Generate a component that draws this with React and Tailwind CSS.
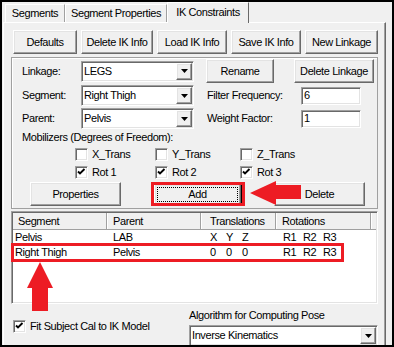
import React from 'react';

// classic win32 bevels
const raised =
  'border border-t-white border-l-white border-r-[#696969] border-b-[#696969] shadow-[inset_-1px_-1px_0_#a0a0a0,inset_1px_1px_0_#e3e3e3] bg-[#f0f0f0]';
const sunken =
  'border border-t-[#a0a0a0] border-l-[#a0a0a0] border-r-white border-b-white shadow-[inset_1px_1px_0_#696969,inset_-1px_-1px_0_#e3e3e3] bg-white p-px';

function Btn({ className = '', children }) {
  return (
    <div className={`flex shrink-0 items-center justify-center ${raised} ${className}`}>
      {children}
    </div>
  );
}

function Combo({ value, className = '' }) {
  return (
    <div className={`flex h-[21px] shrink-0 ${sunken} ${className}`}>
      <div className="flex flex-1 items-center pl-px">{value}</div>
      <div className={`flex w-[16px] items-center justify-center ${raised}`}>
        <svg width="7" height="4" viewBox="0 0 7 4">
          <polygon points="0,0 7,0 3.5,4" fill="#000" />
        </svg>
      </div>
    </div>
  );
}

function Field({ value, className = '' }) {
  return (
    <div className={`flex h-[18px] shrink-0 items-center pl-[2px] ${sunken} ${className}`}>
      {value}
    </div>
  );
}

function Check({ checked, label, className = '' }) {
  return (
    <div className={`flex shrink-0 items-center gap-[4px] ${className}`}>
      <div className={`relative h-[13px] w-[13px] ${sunken}`}>
        {checked && (
          <svg className="absolute left-[-1px] top-[-1px]" width="13" height="13" viewBox="0 0 13 13">
            <polyline points="3,5.5 5,7.5 9.5,3" fill="none" stroke="#000" strokeWidth="1.9" />
          </svg>
        )}
      </div>
      <span>{label}</span>
    </div>
  );
}

function Tab({ className = '', children }) {
  return (
    <div
      className={`flex h-[18px] shrink-0 items-center justify-center border border-b-0 border-t-white border-l-white border-r-[#a0a0a0] ${className}`}
    >
      {children}
    </div>
  );
}

const rows = [
  { seg: 'Pelvis', parent: 'LAB', tr: ['X', 'Y', 'Z'] },
  { seg: 'Right Thigh', parent: 'Pelvis', tr: ['0', '0', '0'] }
];

export default function App() {
  return (
    <div className="relative h-[347px] w-[394px] overflow-hidden border-2 border-black bg-[#f0f0f0] font-['Liberation_Sans',Arial,sans-serif] text-[11px] leading-none tracking-[-0.4px] text-black">
      {/* tabs */}
      <div className="flex h-[20px] items-end pl-[3px]">
        <Tab className="w-[60px]">Segments</Tab>
        <Tab className="w-[102px]">Segment Properties</Tab>
        <div className="relative z-10 -mb-px flex h-[21px] w-[82px] items-center justify-center border border-b-0 border-t-white border-l-white border-r-[#696969] bg-[#f0f0f0] pb-[2px]">
          IK Constraints
        </div>
      </div>

      {/* tab page */}
      <div className="ml-px h-[330px] w-[383px] border border-t-white border-l-white border-r-[#696969] border-b-[#696969] shadow-[inset_-1px_0_0_#a0a0a0]">
        <div className="mt-[7px] flex gap-[4px] pl-[9px]">
          <Btn className="h-[24px] w-[64px]">Defaults</Btn>
          <Btn className="h-[24px] w-[72px]">Delete IK Info</Btn>
          <Btn className="h-[24px] w-[70px]">Load IK Info</Btn>
          <Btn className="h-[24px] w-[70px]">Save IK Info</Btn>
          <Btn className="h-[24px] w-[73px]">New Linkage</Btn>
        </div>

        {/* linkage group */}
        <div className="ml-[7px] mt-[3px] h-[152px] w-[367px] border border-[#a0a0a0] shadow-[inset_1px_1px_0_#fff]">
          <div className="mt-px flex h-[24px] items-center pl-[10px]">
            <span className="w-[59px]">Linkage:</span>
            <Combo value="LEGS" className="w-[113px]" />
            <Btn className="ml-[12px] h-[24px] w-[68px]">Rename</Btn>
            <Btn className="ml-[20px] h-[24px] w-[80px]">Delete Linkage</Btn>
          </div>
          <div className="mt-[2px] flex h-[21px] items-center pl-[10px]">
            <span className="w-[59px]">Segment:</span>
            <Combo value="Right Thigh" className="w-[113px]" />
            <span className="ml-[13px] w-[94px]">Filter Frequency:</span>
            <Field value="6" className="w-[60px]" />
          </div>
          <div className="mt-[2px] flex h-[21px] items-center pl-[10px]">
            <span className="w-[59px]">Parent:</span>
            <Combo value="Pelvis" className="w-[113px]" />
            <span className="ml-[13px] w-[94px]">Weight Factor:</span>
            <Field value="1" className="w-[60px]" />
          </div>
          <div className="mt-px flex h-[14px] items-center pl-[10px]">Mobilizers (Degrees of Freedom):</div>
          <div className="mt-[3px] flex h-[15px] items-center pl-[63px]">
            <Check label="X_Trans" className="w-[80px]" />
            <Check label="Y_Trans" className="w-[85px]" />
            <Check label="Z_Trans" />
          </div>
          <div className="mt-[3px] flex h-[15px] items-center pl-[63px]">
            <Check checked label="Rot 1" className="w-[80px]" />
            <Check checked label="Rot 2" className="w-[85px]" />
            <Check checked label="Rot 3" />
          </div>
          <div className="mt-[2px] flex h-[24px] items-center pl-[18px]">
            <Btn className="h-[24px] w-[91px]">Properties</Btn>
            <div className="ml-[32px] flex h-[23px] w-[89px] shrink-0 border border-black">
              <div className={`flex flex-1 p-[2px] ${raised}`}>
                <div className="flex flex-1 items-center justify-center border border-dotted border-black">Add</div>
              </div>
            </div>
            <Btn className="ml-[32px] h-[24px] w-[91px]">Delete</Btn>
          </div>
        </div>

        {/* list view */}
        <div className={`ml-[7px] mt-[2px] h-[93px] w-[367px] ${sunken}`}>
          <div className="flex h-[17px] border-b border-b-[#a0a0a0] bg-[#f0f0f0]">
            <div className="flex w-[94px] items-center border-r border-r-[#a0a0a0] pl-[5px]">Segment</div>
            <div className="flex w-[94px] items-center border-r border-r-[#a0a0a0] pl-[6px] shadow-[inset_1px_0_0_#fff]">Parent</div>
            <div className="flex w-[75px] items-center border-r border-r-[#a0a0a0] pl-[9px] shadow-[inset_1px_0_0_#fff]">Translations</div>
            <div className="flex w-[95px] items-center border-r border-r-[#a0a0a0] pl-[6px] shadow-[inset_1px_0_0_#fff]">Rotations</div>
            <div className="flex-1 shadow-[inset_1px_0_0_#fff]" />
          </div>
          {rows.map((r) => (
            <div key={r.seg} className="flex h-[15px] items-center">
              <div className="w-[94px] pl-[2px]">{r.seg}</div>
              <div className="w-[95px] pl-[6px]">{r.parent}</div>
              <div className="flex w-[75px] pl-[8px]">
                {r.tr.map((t, i) => (
                  <span key={i} className="w-[16px]">{t}</span>
                ))}
              </div>
              <div className="flex pl-[6px]">
                {['R1', 'R2', 'R3'].map((t) => (
                  <span key={t} className="w-[20px]">{t}</span>
                ))}
              </div>
            </div>
          ))}
        </div>

        {/* bottom options */}
        <div className="ml-[9px] mt-[4px] flex">
          <div className="w-[176px] pt-[12px]">
            <Check checked label="Fit Subject Cal to IK Model" />
          </div>
          <div className="flex w-[189px] flex-col">
            <div className="flex h-[14px] items-center">Algorithm for Computing Pose</div>
            <Combo value="Inverse Kinematics" className="mt-[3px] h-[19px] w-[189px]" />
          </div>
        </div>
      </div>

      {/* red annotations */}
      <svg
        className="pointer-events-none absolute left-[-2px] top-[-2px]"
        width="394"
        height="347"
        viewBox="0 0 394 347"
      >
        <rect x="152.5" y="183.5" width="91" height="21" fill="none" stroke="#ed1c24" strokeWidth="3" />
        <rect x="12.5" y="244.5" width="330" height="16" fill="none" stroke="#ed1c24" strokeWidth="3" />
        <polygon points="250,193 276,181 276,185 301,185 301,199 276,199 276,205" fill="#ed1c24" />
        <polygon points="40,262 53,288 48,288 48,311 32,311 32,288 27,288" fill="#ed1c24" />
      </svg>
    </div>
  );
}
